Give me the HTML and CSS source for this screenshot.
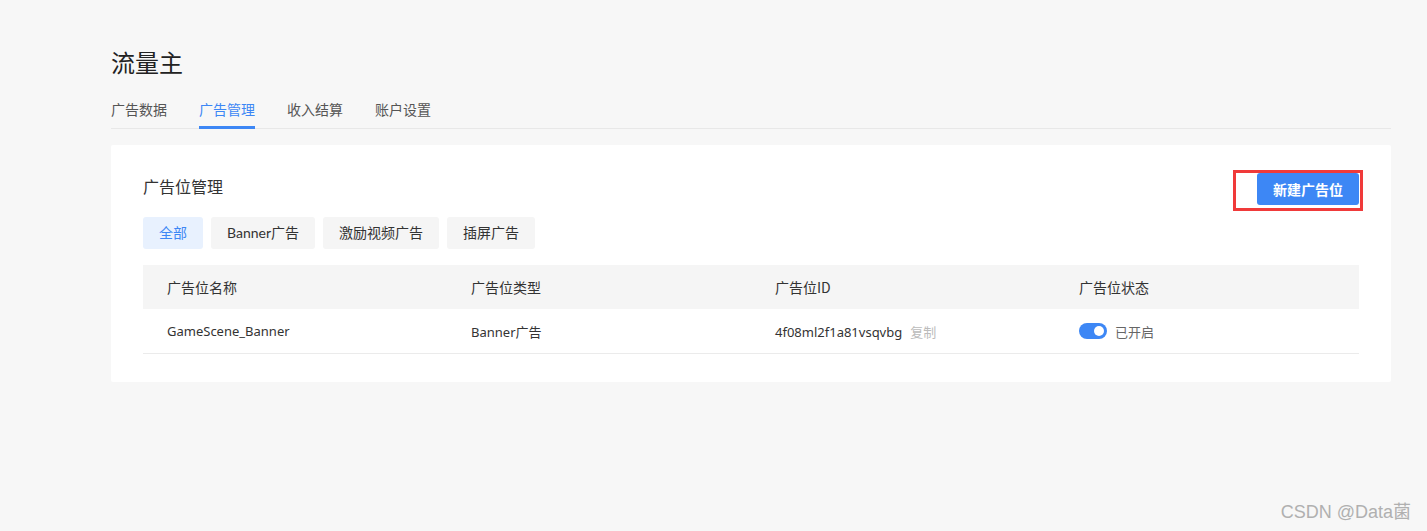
FILE: index.html
```html
<!DOCTYPE html>
<html lang="zh-CN">
<head>
    <meta charset="UTF-8">
    <title>流量主</title>
    <link rel="stylesheet" href="styles.css">
</head>
<body>
    <div class="page">
        <h1 class="title">流量主</h1>
        <div class="tabs">
            <div class="tab">广告数据</div>
            <div class="tab active">广告管理</div>
            <div class="tab">收入结算</div>
            <div class="tab">账户设置</div>
        </div>

        <div class="card">
            <div class="card-head">
                <div class="card-title">广告位管理</div>
                <div class="btn-wrap">
                    <button class="btn-primary">新建广告位</button>
                    <div class="mark"></div>
                </div>
            </div>
            <div class="chips">
                <div class="chip active">全部</div>
                <div class="chip">Banner广告</div>
                <div class="chip">激励视频广告</div>
                <div class="chip">插屏广告</div>
            </div>
            <div class="table">
                <div class="row head">
                    <div class="cell">广告位名称</div>
                    <div class="cell">广告位类型</div>
                    <div class="cell">广告位ID</div>
                    <div class="cell">广告位状态</div>
                </div>
                <div class="row">
                    <div class="cell">GameScene_Banner</div>
                    <div class="cell">Banner广告</div>
                    <div class="cell">4f08ml2f1a81vsqvbg<span class="copy">复制</span></div>
                    <div class="cell status">
                        <span class="switch"><span class="knob"></span></span>
                        <span class="status-text">已开启</span>
                    </div>
                </div>
            </div>
        </div>
    </div>
    <div class="watermark">CSDN @Data菌</div>
</body>
</html>
```

FILE: styles.css
```css
html, body {
    margin: 0;
    padding: 0;
}
body {
    background-color: #f7f7f7;
    font-family: "Noto Sans", "Noto Sans CJK SC", sans-serif;
    color: #333;
    font-size: 14px;
    width: 1427px;
    height: 531px;
    overflow: hidden;
    position: relative;
}
.page {
    padding: 45px 36px 0 111px;
}
.title {
    margin: 0;
    font-size: 24px;
    font-weight: 400;
    line-height: 34px;
    color: #222;
    font-family: "Noto Sans CJK SC", sans-serif;
}
.tabs {
    display: flex;
    gap: 32px;
    margin-top: 20px;
    border-bottom: 1px solid #e8e8e8;
}
.tab {
    font-family: "Noto Sans CJK SC", sans-serif;
    font-size: 14px;
    line-height: 20px;
    color: #555;
    padding-bottom: 7px;
    border-bottom: 3px solid transparent;
    margin-bottom: -1px;
}
.tab.active {
    color: #3d87f5;
    border-bottom-color: #3d87f5;
}
.card {
    margin-top: 16px;
    background: #fff;
    border-radius: 2px;
    padding: 28px 32px;
}
.card-head {
    display: flex;
    justify-content: space-between;
    align-items: center;
    height: 32px;
}
.card-title {
    font-family: "Noto Sans CJK SC", sans-serif;
    font-size: 16px;
    color: #333;
    margin-bottom: 6px;
}
.btn-wrap {
    position: relative;
}
.btn-primary {
    display: block;
    width: 102px;
    height: 32px;
    border: none;
    border-radius: 3px;
    background: #3d87f5;
    color: #fff;
    font-family: "Noto Sans CJK SC", sans-serif;
    font-size: 14px;
    font-weight: 700;
}
.mark {
    position: absolute;
    left: -24px;
    top: -3px;
    width: 124px;
    height: 35px;
    border: 3px solid #f03a3a;
}
.chips {
    display: flex;
    gap: 8px;
    margin-top: 12px;
}
.chip {
    height: 32px;
    line-height: 32px;
    padding: 0 16px;
    border-radius: 3px;
    background: #f5f5f5;
    color: #333;
    font-family: "Lato", "Noto Sans CJK SC", sans-serif;
    font-size: 14px;
}
.chip.active {
    background: #e8f1fe;
    color: #3d87f5;
}
.table {
    margin-top: 16px;
}
.row {
    display: grid;
    grid-template-columns: repeat(4, 1fr);
    height: 44px;
    align-items: center;
    border-bottom: 1px solid #ebebeb;
}
.row.head {
    background: #f5f5f5;
    border-bottom: none;
}
.cell {
    padding-left: 24px;
    font-size: 13px;
    color: #333;
}
.row.head .cell {
    font-size: 14px;
    font-family: "Noto Sans CJK SC", sans-serif;
}
.copy {
    color: #bbb;
    margin-left: 8px;
}
.status {
    display: flex;
    align-items: center;
}
.switch {
    display: inline-block;
    position: relative;
    width: 28px;
    height: 16px;
    border-radius: 8px;
    background: #3d87f5;
}
.knob {
    position: absolute;
    right: 3px;
    top: 3px;
    width: 10px;
    height: 10px;
    border-radius: 50%;
    background: #fff;
}
.status-text {
    margin-left: 8px;
    color: #666;
}
.watermark {
    position: absolute;
    right: 16px;
    bottom: 8px;
    font-family: "Liberation Sans", "Noto Sans CJK SC", sans-serif;
    font-size: 18px;
    color: #b0b0b0;
}
```
